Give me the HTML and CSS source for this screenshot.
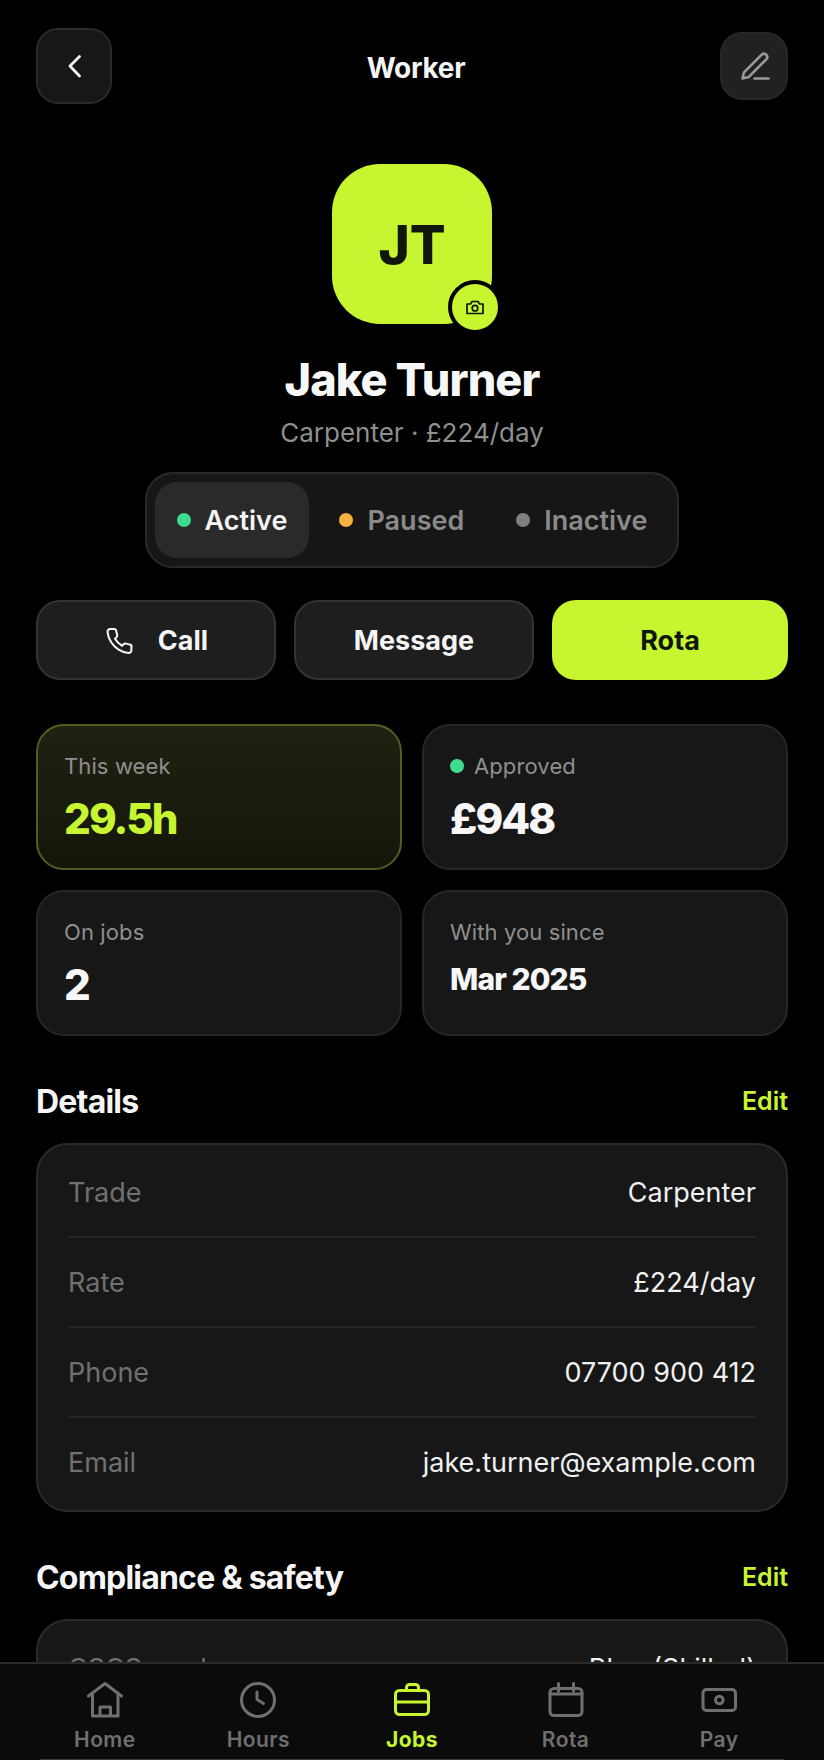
FILE: index.html
```html
<!DOCTYPE html>
<html lang="en">
<head>
<meta charset="utf-8">
<title>Worker</title>
<link rel="stylesheet" href="styles.css">
</head>
<body>
<div class="screen">
  <header class="topbar">
    <button class="icon-btn back" aria-label="Back">
      <svg class="ico" width="40" height="40" viewBox="0 0 40 40"><path d="M25.500 10.500 L16 20 L25.500 30" stroke="#f5f5f5" stroke-width="2.800"/></svg>
    </button>
    <h1 class="title">Worker</h1>
    <button class="icon-btn edit" aria-label="Edit">
      <svg class="ico" width="40" height="40" viewBox="0 0 40 40"><path d="M8.500 32.500 L10 26.300 L27.670 8.670 A3.300 3.300 0 0 1 32.330 13.330 L14.800 30.900 Z" stroke="#9a9a9a" stroke-width="2.600"/><path d="M20.500 32.500 H34.500" stroke="#9a9a9a" stroke-width="2.600"/></svg>
    </button>
  </header>

  <section class="profile">
    <div class="avatar">
      <span class="initials">JT</span>
      <span class="cam">
        <svg class="ico" width="24" height="24" viewBox="0 0 24 24"><path d="M4 9 H7.500 L9 6.500 H15 L16.500 9 H20 V18.500 H4 Z" stroke="#0f1405" stroke-width="1.700"/><circle cx="12" cy="13.200" r="2.800" stroke="#0f1405" stroke-width="1.700"/></svg>
      </span>
    </div>
    <h2 class="name">Jake Turner</h2>
    <p class="sub">Carpenter · £224/day</p>
    <div class="segment">
      <div class="seg on"><i class="dot green"></i>Active</div>
      <div class="seg"><i class="dot amber"></i>Paused</div>
      <div class="seg"><i class="dot grey"></i>Inactive</div>
    </div>
  </section>

  <div class="actions">
    <button class="btn">
      <svg class="ico" width="32" height="32" viewBox="1.100 0.900 22.670 22.670"><path d="M20.500 16.200v2.600a1.900 1.900 0 0 1-2.100 1.900 16.600 16.600 0 0 1-7.200-2.600 16.300 16.300 0 0 1-5-5 16.600 16.600 0 0 1-2.600-7.200A1.900 1.900 0 0 1 5.500 3.800h2.600a1.700 1.700 0 0 1 1.700 1.500c.1.800.3 1.600.6 2.400a1.700 1.700 0 0 1-.4 1.800l-1.100 1.100a13.800 13.800 0 0 0 5 5l1.100-1.100a1.700 1.700 0 0 1 1.800-.4c.8.300 1.600.5 2.400.6a1.700 1.700 0 0 1 1.500 1.700z" stroke="#f5f5f5" stroke-width="1.450"/></svg>
      Call
    </button>
    <button class="btn">Message</button>
    <button class="btn primary">Rota</button>
  </div>

  <div class="stats">
    <div class="stat hot">
      <div class="stat-label">This week</div>
      <div class="stat-value lime">29.5h</div>
    </div>
    <div class="stat">
      <div class="stat-label"><i class="dot small green"></i>Approved</div>
      <div class="stat-value">£948</div>
    </div>
    <div class="stat">
      <div class="stat-label">On jobs</div>
      <div class="stat-value">2</div>
    </div>
    <div class="stat">
      <div class="stat-label">With you since</div>
      <div class="stat-value small">Mar 2025</div>
    </div>
  </div>

  <section class="block">
    <div class="block-head"><h3>Details</h3><span class="link">Edit</span></div>
    <div class="card">
      <div class="row"><span>Trade</span><b>Carpenter</b></div>
      <div class="row"><span>Rate</span><b>£224/day</b></div>
      <div class="row"><span>Phone</span><b>07700 900 412</b></div>
      <div class="row"><span>Email</span><b>jake.turner@example.com</b></div>
    </div>
  </section>

  <section class="block">
    <div class="block-head"><h3>Compliance &amp; safety</h3><span class="link">Edit</span></div>
    <div class="card">
      <div class="row"><span>CSCS card</span><b>Blue (Skilled)</b></div>
    </div>
  </section>

  <nav class="tabbar">
    <div class="tab">
      <svg class="ico" width="40" height="40" viewBox="0 0 40 40"><path d="M3.500 16 L20 3.500 L36.500 16" stroke="currentColor" stroke-width="3"/><path d="M7.500 13 V36 H33 V13 M15 36 V27 H25.500 V36" stroke="currentColor" stroke-width="3"/></svg>
      <span>Home</span>
    </div>
    <div class="tab">
      <svg class="ico" width="40" height="40" viewBox="0 0 40 40"><circle cx="20" cy="20" r="16.500" stroke="currentColor" stroke-width="3"/><path d="M19 12 V19.500 L25.500 23.500" stroke="currentColor" stroke-width="3"/></svg>
      <span>Hours</span>
    </div>
    <div class="tab active">
      <svg class="ico" width="40" height="40" viewBox="0 0 40 40"><rect x="3.500" y="10.500" width="33" height="24" rx="4" stroke="currentColor" stroke-width="3"/><path d="M14.500 10 V7.500 A3 3 0 0 1 17.500 4.500 H23.500 A3 3 0 0 1 26.500 7.500 V10 M3.500 22 H36.500" stroke="currentColor" stroke-width="3"/></svg>
      <span>Jobs</span>
    </div>
    <div class="tab">
      <svg class="ico" width="40" height="40" viewBox="0 0 40 40"><rect x="4" y="8.500" width="32" height="27" rx="4" stroke="currentColor" stroke-width="3"/><path d="M4 14 H36 M12.500 3.500 V11 M27.500 3.500 V11" stroke="currentColor" stroke-width="3"/></svg>
      <span>Rota</span>
    </div>
    <div class="tab">
      <svg class="ico" width="40" height="40" viewBox="0 0 40 40"><rect x="4" y="9.500" width="32.500" height="21" rx="3.500" stroke="currentColor" stroke-width="3"/><circle cx="20.300" cy="20" r="3.800" stroke="currentColor" stroke-width="3"/></svg>
      <span>Pay</span>
    </div>
  </nav>
</div>
</body>
</html>
```
FILE: styles.css
```css
* { box-sizing: border-box; }
html, body { margin: 0; padding: 0; background: #000; }
body { font-family: Inter, "Liberation Sans", sans-serif; color: #f5f5f5; }
h1, h2, h3, p { margin: 0; }
button { font: inherit; color: inherit; cursor: pointer; }
.ico { display: block; fill: none; stroke-linecap: round; stroke-linejoin: round; flex: none; }
i { display: block; flex: none; }

.screen { position: relative; width: 824px; height: 1760px; overflow: hidden; padding: 28px 36px 0; }

.topbar { display: flex; justify-content: space-between; align-items: center; }
.icon-btn { display: flex; align-items: center; justify-content: center; padding: 0; border-radius: 22px; }
.back { width: 76px; height: 76px; background: #171717; border: 2px solid #2a2a2a; }
.edit { width: 68px; height: 68px; background: #212121; border: 2px solid #272727; }
.title { font-size: 28px; line-height: 36px; font-weight: 700; letter-spacing: -0.01em; position: relative; top: 2px; }

.profile { display: flex; flex-direction: column; align-items: center; margin-top: 60px; }
.avatar { position: relative; width: 160px; height: 160px; padding-top: 2px; border-radius: 48px; background: #c7f631; display: flex; align-items: center; justify-content: center; }
.initials { font-size: 53px; line-height: 1; font-weight: 800; color: #10160a; }
.cam { position: absolute; right: -10px; bottom: -10px; width: 54px; height: 54px; border-radius: 50%; background: #c7f631; border: 4px solid #000; display: flex; align-items: center; justify-content: center; }
.name { margin-top: 29px; font-size: 45px; line-height: 54px; font-weight: 800; letter-spacing: -0.02em; color: #f7f7f7; }
.sub { margin-top: 10px; font-size: 26px; line-height: 32px; color: #8f8f8f; }

.segment { display: flex; gap: 8px; margin-top: 23px; padding: 8px; background: #161616; border: 2px solid #2a2a2a; border-radius: 28px; }
.seg { display: flex; align-items: center; gap: 14px; height: 76px; padding: 0 22px; border-radius: 22px; font-size: 27px; font-weight: 600; color: #8a8a8a; }
.seg.on { background: #2a2a2a; color: #f5f5f5; }
.dot { width: 14px; height: 14px; border-radius: 50%; }
.dot.small { width: 14px; height: 14px; }
.green { background: #3ddc8e; }
.amber { background: #f5b342; }
.grey { background: #808080; }

.actions { display: flex; gap: 18px; margin-top: 32px; }
.btn { flex: 1 1 0; display: flex; align-items: center; justify-content: center; gap: 22px; height: 80px; padding: 1px 0 0; background: #1e1e1e; border: 2px solid #333; border-radius: 24px; font-size: 27px; font-weight: 700; color: #f5f5f5; }
.btn.primary { background: #c7f631; border: 0; color: #10160a; }

.stats { display: grid; grid-template-columns: 1fr 1fr; gap: 20px; margin-top: 44px; }
.stat { height: 146px; padding: 26px; background: #171717; border: 2px solid #262626; border-radius: 28px; }
.stat.hot { background: linear-gradient(180deg, #1f2212, #14160a); border-color: #525e20; }
.stat-label { display: flex; align-items: center; gap: 10px; font-size: 22px; line-height: 28px; letter-spacing: 0.005em; color: #8f8f8f; }
.stat-value { margin-top: 14px; font-size: 42px; line-height: 50px; font-weight: 800; letter-spacing: -0.045em; color: #f7f7f7; }
.stat-value.small { font-size: 30px; line-height: 38px; letter-spacing: -0.03em; }
.lime { color: #c7f631; }

.block { margin-top: 45px; }
.block-head { display: flex; justify-content: space-between; align-items: center; height: 40px; margin-bottom: 22px; }
.block-head h3 { padding-top: 2px; font-size: 32px; line-height: 38px; font-weight: 700; letter-spacing: -0.025em; }
.link { font-size: 25px; font-weight: 600; color: #c7f631; }

.card { padding: 3px 30px 2px; background: #171717; border: 2px solid #2a2a2a; border-radius: 32px; }
.row { display: flex; justify-content: space-between; align-items: center; height: 90px; font-size: 27px; border-bottom: 2px solid #262626; }
.row:last-child { border-bottom: 0; padding-bottom: 2px; }
.row span { color: #707070; }
.row b { font-weight: 400; color: #f0f0f0; }

.tabbar { position: absolute; left: 0; right: 0; bottom: 0; height: 98px; display: flex; padding: 0 28px; background: #0b0b0b; border-top: 2px solid #2a2a2a; }
.tabbar::after { content: ""; position: absolute; left: 40px; right: 40px; bottom: 0; height: 1px; background: #3a3a3a; }
.tab { flex: 1 1 0; display: flex; flex-direction: column; align-items: center; padding-top: 16px; color: #6f6f6f; }
.tab span { margin-top: 7px; font-size: 21px; line-height: 26px; font-weight: 600; letter-spacing: 0.02em; }
.tab.active { color: #c7f631; }
.tab.active span { font-weight: 700; }
```
